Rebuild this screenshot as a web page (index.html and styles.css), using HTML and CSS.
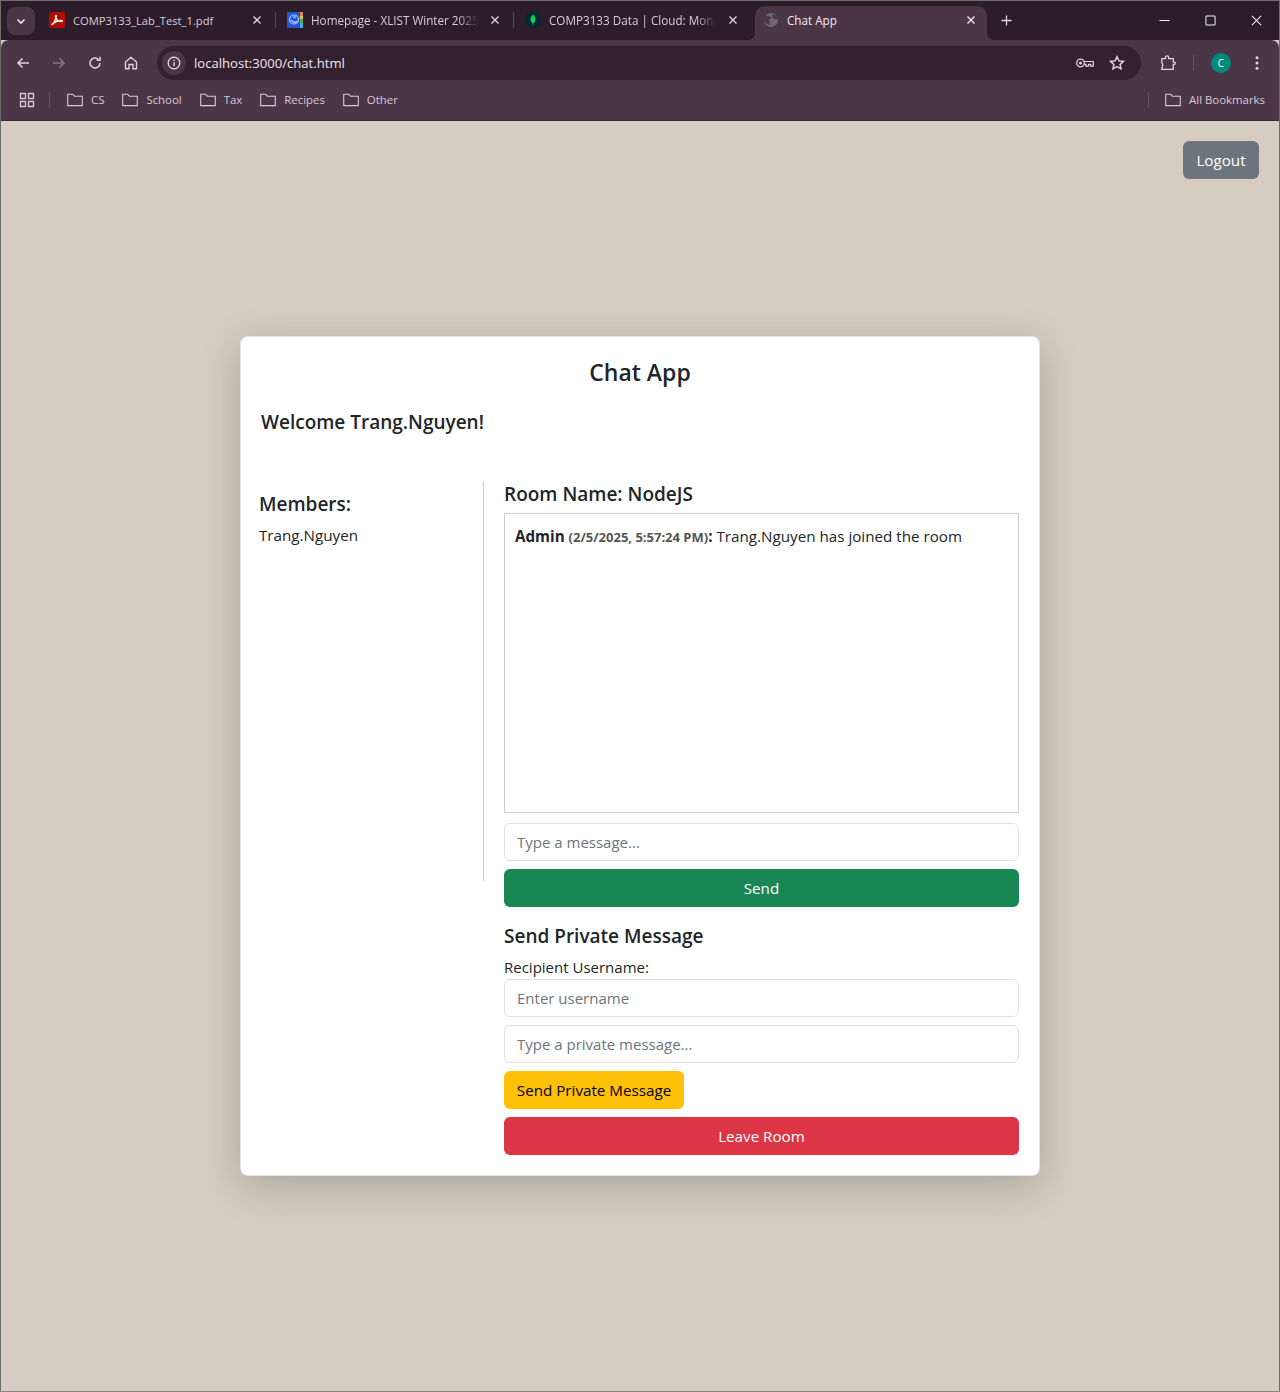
FILE: index.html
```html
<!DOCTYPE html>
<html lang="en">
<head>
    <meta charset="UTF-8">
    <meta name="viewport" content="width=device-width, initial-scale=1.0">
    <title>Chat App</title>
    <link rel="stylesheet" href="styles.css">
</head>
<body>
  <div class="window">
    <!-- browser tabs -->
    <div class="tabstrip">
      <button class="tab-search">
        <svg width="12" height="12" viewBox="0 0 12 12"><path d="M2.500 4.500 6 8l3.500-3.500" fill="none" stroke="#efe3ec" stroke-width="1.600"/></svg>
      </button>
      <div class="tab">
        <svg class="favicon" viewBox="0 0 16 16"><rect width="16" height="16" rx="2" fill="#b30b00"/><path d="M3.200 12.500c1.500-1.200 3.200-4.400 4.100-8.200.2-1.300-.8-1.300-.7 0 .4 2.900 2.200 5 6 5.100 1.100 0 1-.9-.2-.9-2.700 0-5.900.9-8.500 3-.9.800-.9 1.400-.7 1z" fill="none" stroke="#fff" stroke-width="1.400"/></svg>
        <span class="tab-title">COMP3133_Lab_Test_1.pdf</span>
        <svg class="tab-close" viewBox="0 0 10 10"><path d="M1.500 1.500l7 7m0-7l-7 7" stroke="#e6d8e3" stroke-width="1.300"/></svg>
      </div>
      <div class="tab-sep"></div>
      <div class="tab">
        <svg class="favicon" viewBox="0 0 16 16"><rect width="16" height="16" fill="#2456d6"/><rect x="13" width="3" height="4" fill="#e8803a"/><rect x="13" y="4" width="3" height="3" fill="#e8c23a"/><rect x="13" y="7" width="3" height="4" fill="#3fb552"/><rect x="13" y="11" width="3" height="5" fill="#48a6e8"/><circle cx="7" cy="7.500" r="4.500" fill="none" stroke="#b9ccf5" stroke-width="1.200"/><path d="M4 8c2 2.500 4 3 6 1.500M6 5h3" fill="none" stroke="#dbe6ff" stroke-width="1.200"/></svg>
        <span class="tab-title fade">Homepage - XLIST Winter 2025</span>
        <svg class="tab-close" viewBox="0 0 10 10"><path d="M1.500 1.500l7 7m0-7l-7 7" stroke="#e6d8e3" stroke-width="1.300"/></svg>
      </div>
      <div class="tab-sep"></div>
      <div class="tab">
        <svg class="favicon" viewBox="0 0 16 16"><circle cx="8" cy="8" r="8" fill="#04282f"/><path d="M8 2.500c2 2 2.800 4 2.300 6-.4 1.500-1.300 2.300-2 3.200h-.6c-.7-.9-1.600-1.700-2-3.200-.5-2 .3-4 2.300-6z" fill="#13cc5c"/><path d="M7.700 11.500h.6v2h-.6z" fill="#7a9a80"/></svg>
        <span class="tab-title fade">COMP3133 Data | Cloud: MongoDB</span>
        <svg class="tab-close" viewBox="0 0 10 10"><path d="M1.500 1.500l7 7m0-7l-7 7" stroke="#e6d8e3" stroke-width="1.300"/></svg>
      </div>
      <div class="tab active">
        <svg class="favicon" viewBox="0 0 16 16"><circle cx="8" cy="8" r="7" fill="#6d6670"/><path d="M3 3.500c2 .5 3 1 4.500 1s1 2-.5 2.500-1.500 1.500-.5 2.500.5 3-1 3.500C3 12 1 10 1 7.500c0-1.500 1-3 2-4zM10 2c2 1 4 2.500 4.500 5-1 .500-2 .500-3 0s-2.500-1-2-2.500S9.500 3 10 2z" fill="#4a3647"/></svg>
        <span class="tab-title">Chat App</span>
        <svg class="tab-close" viewBox="0 0 10 10"><path d="M1.500 1.500l7 7m0-7l-7 7" stroke="#f2e6ef" stroke-width="1.300"/></svg>
      </div>
      <svg class="new-tab" viewBox="0 0 12 12"><path d="M6 .5v11M.5 6h11" stroke="#e6d8e3" stroke-width="1.400"/></svg>
      <div class="win-controls">
        <svg viewBox="0 0 12 12"><path d="M.5 6h11" stroke="#f2f0f2" stroke-width="1.100"/></svg>
        <svg viewBox="0 0 12 12"><rect x="1" y="1" width="10" height="10" rx="1" fill="none" stroke="#f2f0f2" stroke-width="1.100"/></svg>
        <svg viewBox="0 0 12 12"><path d="M1 1l10 10m0-10L1 11" stroke="#f2f0f2" stroke-width="1.100"/></svg>
      </div>
    </div>

    <!-- address bar -->
    <div class="toolbar">
      <svg class="tool-icon" viewBox="0 0 16 16"><path d="M14 8H3M7.500 3.500 3 8l4.500 4.500" fill="none" stroke="#e2d2df" stroke-width="1.500"/></svg>
      <svg class="tool-icon" viewBox="0 0 16 16"><path d="M2 8h11M8.500 3.500 13 8l-4.500 4.500" fill="none" stroke="#857482" stroke-width="1.500"/></svg>
      <svg class="tool-icon" viewBox="0 0 16 16"><path d="M13 8a5 5 0 1 1-1.600-3.700M13 1.800v3.400H9.600" fill="none" stroke="#e2d2df" stroke-width="1.500"/></svg>
      <svg class="tool-icon" viewBox="0 0 16 16"><path d="M2.500 7 8 2.300 13.500 7v6.700H10V9.500H6v4.200H2.500z" fill="none" stroke="#e2d2df" stroke-width="1.400"/></svg>
      <div class="omnibox">
        <div class="site-info">
          <svg viewBox="0 0 14 14" width="14" height="14"><circle cx="7" cy="7" r="5.800" fill="none" stroke="#efe3ec" stroke-width="1.200"/><path d="M7 6.200v4M7 3.800v1.200" stroke="#efe3ec" stroke-width="1.300"/></svg>
        </div>
        <span class="url">localhost:3000/chat.html</span>
        <svg class="key-icon" viewBox="0 0 18 10"><circle cx="4.500" cy="5" r="3.800" fill="none" stroke="#e2d2df" stroke-width="1.300"/><circle cx="4.500" cy="5" r="1.500" fill="#e2d2df"/><path d="M8.300 3.500h9v4.700h-2.600V6.400h-2.200v1.800H9.900V6.400H8.300" fill="none" stroke="#e2d2df" stroke-width="1.200"/></svg>
        <svg class="star-icon" viewBox="0 0 16 16"><path d="M8 1.800l1.900 4.100 4.500.5-3.300 3 .9 4.400L8 11.600l-4 2.200.9-4.400-3.300-3 4.500-.5z" fill="none" stroke="#e2d2df" stroke-width="1.500"/></svg>
      </div>
      <svg class="tool-icon ext" viewBox="0 0 16 16"><path d="M1.800 3.600h3.700V2.400a1.600 1.600 0 0 1 3.200 0v1.200h4.600v3.500h.9a.9.900 0 0 1 0 2.200h-.9v5H1.800l.9-4.300c.2-1-.4-1.700-.9-2.500z" fill="none" stroke="#e2d2df" stroke-width="1.300"/></svg>
      <div class="bar-sep"></div>
      <div class="avatar">C</div>
      <svg class="tool-icon menu" viewBox="0 0 16 16"><circle cx="8" cy="2.800" r="1.500" fill="#e2d2df"/><circle cx="8" cy="8" r="1.500" fill="#e2d2df"/><circle cx="8" cy="13.200" r="1.500" fill="#e2d2df"/></svg>
    </div>

    <!-- bookmarks -->
    <div class="bookmarks">
      <svg class="apps-icon" viewBox="0 0 16 16"><path d="M1.500 1.500h5v5h-5zM9.500 1.500h5v5h-5zM1.500 9.500h5v5h-5zM9.500 9.500h5v5h-5z" fill="none" stroke="#d9c8d5" stroke-width="1.300"/></svg>
      <div class="bar-sep"></div>
      <div class="bookmark">
        <svg class="folder" viewBox="0 0 16 14"><path d="M.7 12.600V1.200h5l1.600 2h8v9.400z" fill="none" stroke="#d9c8d5" stroke-width="1.100"/></svg>
        <span>CS</span>
      </div>
      <div class="bookmark">
        <svg class="folder" viewBox="0 0 16 14"><path d="M.7 12.600V1.200h5l1.600 2h8v9.400z" fill="none" stroke="#d9c8d5" stroke-width="1.100"/></svg>
        <span>School</span>
      </div>
      <div class="bookmark">
        <svg class="folder" viewBox="0 0 16 14"><path d="M.7 12.600V1.200h5l1.600 2h8v9.400z" fill="none" stroke="#d9c8d5" stroke-width="1.100"/></svg>
        <span>Tax</span>
      </div>
      <div class="bookmark">
        <svg class="folder" viewBox="0 0 16 14"><path d="M.7 12.600V1.200h5l1.600 2h8v9.400z" fill="none" stroke="#d9c8d5" stroke-width="1.100"/></svg>
        <span>Recipes</span>
      </div>
      <div class="bookmark">
        <svg class="folder" viewBox="0 0 16 14"><path d="M.7 12.600V1.200h5l1.600 2h8v9.400z" fill="none" stroke="#d9c8d5" stroke-width="1.100"/></svg>
        <span>Other</span>
      </div>
      <div class="bar-sep push"></div>
      <div class="bookmark all">
        <svg class="folder" viewBox="0 0 16 14"><path d="M.7 12.600V1.200h5l1.600 2h8v9.400z" fill="none" stroke="#d9c8d5" stroke-width="1.100"/></svg>
        <span>All Bookmarks</span>
      </div>
    </div>

    <!-- the page itself -->
    <main class="page">
      <button class="btn btn-logout">Logout</button>

      <div class="card">
        <h2 class="card-title">Chat App</h2>
        <h4 class="welcome">Welcome Trang.Nguyen!</h4>

        <div class="chat-layout">
          <aside class="members">
            <h4>Members:</h4>
            <p>Trang.Nguyen</p>
          </aside>

          <section class="room">
            <h4>Room Name: NodeJS</h4>
            <div class="messages">
              <p><strong>Admin <small>(2/5/2025, 5:57:24 PM)</small>:</strong> Trang.Nguyen has joined the room</p>
            </div>
            <input class="field" type="text" placeholder="Type a message...">
            <button class="btn btn-send">Send</button>

            <h4 class="private-title">Send Private Message</h4>
            <label for="recipient">Recipient Username:</label>
            <input class="field" id="recipient" type="text" placeholder="Enter username">
            <input class="field" type="text" placeholder="Type a private message...">
            <button class="btn btn-private">Send Private Message</button>
            <button class="btn btn-leave">Leave Room</button>
          </section>
        </div>
      </div>
    </main>
  </div>
</body>
</html>
```

FILE: styles.css
```css
*{
  padding: 0;
  margin: 0;
  box-sizing: border-box;
}

body{
  font-family: "Open Sans", "Noto Sans", sans-serif;
  color: #212529;
  background-color: #d6ccc1;
}

.window{
  min-height: 1392px;
  display: flex;
  flex-direction: column;
  border: 1px solid #6e6e68;
  border-bottom-color: #8a857e;
}

/*tab strip*/
.tabstrip{
  height: 39px;
  display: flex;
  align-items: flex-end;
  background-color: #2d1d2b;
  font-size: 11.200px;
  color: #dccbd8;
}

.tab-search{
  width: 28px;
  height: 28px;
  margin: 0 1px 5px 6px;
  border: none;
  border-radius: 8px;
  background-color: #4a3647;
  display: flex;
  align-items: center;
  justify-content: center;
}

.tab{
  width: 237px;
  height: 34px;
  display: flex;
  align-items: center;
  padding: 0 7px 6px 13px;
  flex-shrink: 0;
  position: relative;
}

.tab.active{
  width: 232px;
  margin-left: 6px;
  padding: 0 7px 6px 8px;
  background-color: #4a3647;
  border-radius: 10px 10px 0 0;
  color: #f3e8f0;
  font-size: 11.700px;
}

/*curved feet on the active tab*/
.tab.active::before,
.tab.active::after{
  content: "";
  position: absolute;
  bottom: 0;
  width: 8px;
  height: 8px;
}

.tab.active::before{
  left: -8px;
  background: radial-gradient(circle at 0 0, #2d1d2b 8px, #4a3647 8.500px);
}

.tab.active::after{
  right: -8px;
  background: radial-gradient(circle at 100% 0, #2d1d2b 8px, #4a3647 8.500px);
}

.favicon{
  width: 16px;
  height: 16px;
  flex-shrink: 0;
  margin-right: 8px;
}

.tab-title{
  flex: 1;
  white-space: nowrap;
  overflow: hidden;
}

.tab-title.fade{
  font-size: 11.700px;
  -webkit-mask-image: linear-gradient(to right, #000 88%, transparent 100%);
  mask-image: linear-gradient(to right, #000 88%, transparent 100%);
}

.tab-close{
  width: 10px;
  height: 10px;
  flex-shrink: 0;
  margin-left: 12px;
  margin-right: 4px;
}

.tab-sep{
  width: 1px;
  height: 16px;
  margin: 0 -2px 12px 2px;
  background-color: #5a4757;
  flex-shrink: 0;
}

.new-tab{
  width: 11px;
  height: 11px;
  margin: 0 0 14px 14px;
}

.win-controls{
  margin-left: auto;
  display: flex;
  gap: 35px;
  padding: 0 17px 14px 0;
}

.win-controls svg{
  width: 11px;
  height: 11px;
}

/*address bar*/
.toolbar{
  height: 40px;
  display: flex;
  align-items: center;
  background-color: #4a3647;
  border-radius: 8px 8px 0 0;
  padding: 6px 0 0 14px;
}

.tool-icon{
  width: 16px;
  height: 16px;
  margin-right: 20px;
  flex-shrink: 0;
}

.omnibox{
  width: 984px;
  height: 34px;
  margin-left: -2px;
  border-radius: 17px;
  background-color: #33212f;
  display: flex;
  align-items: center;
  padding: 0 16px 0 5px;
  flex-shrink: 0;
}

.site-info{
  width: 24px;
  height: 24px;
  border-radius: 50%;
  background-color: #4a3647;
  display: flex;
  align-items: center;
  justify-content: center;
  margin-right: 8px;
}

.url{
  flex: 1;
  font-size: 13.100px;
  color: #f1e6ee;
}

.key-icon{
  width: 18px;
  height: 10px;
  margin-right: 15px;
}

.star-icon{
  width: 16px;
  height: 16px;
}

.tool-icon.ext{
  margin-left: 19px;
  margin-right: 0;
}

.bar-sep{
  width: 1px;
  height: 16px;
  background-color: #66525f;
  flex-shrink: 0;
}

.toolbar .bar-sep{
  margin-left: 17px;
  margin-right: 17px;
}

.avatar{
  width: 20px;
  height: 20px;
  border-radius: 50%;
  background-color: #00897b;
  color: #fff;
  font-size: 10px;
  display: flex;
  align-items: center;
  justify-content: center;
  margin-right: 18px;
}

.tool-icon.menu{
  margin-right: 0;
}

/*bookmarks bar*/
.bookmarks{
  height: 41px;
  display: flex;
  align-items: center;
  background-color: #4a3647;
  padding: 0 14px 0 18px;
  font-size: 11.400px;
  color: #d9c8d5;
  border-bottom: 1px solid #3a2b38;
}

.apps-icon{
  width: 16px;
  height: 16px;
}

.bookmarks .bar-sep{
  margin: 0 17px 0 14px;
}

.bookmark{
  display: flex;
  align-items: center;
  gap: 8px;
  margin-right: 18px;
}

.bookmark span{
  margin-top: -2px;
}

.folder{
  width: 16px;
  height: 14px;
}

.bookmarks .bar-sep.push{
  margin: 0 16px 0 auto;
}

.bookmark.all{
  margin-right: 0;
}

/*page*/
.page{
  flex: 1;
  position: relative;
  display: flex;
  justify-content: center;
  padding-top: 215px;
}

.btn{
  height: 38px;
  border: none;
  border-radius: 6px;
  font-family: inherit;
  font-size: 15.200px;
  color: #fff;
}

.btn-logout{
  position: absolute;
  top: 20px;
  right: 20px;
  width: 76px;
  background-color: #6c757d;
}

/*main card*/
.card{
  width: 800px;
  height: 840px;
  padding: 20px;
  background-color: #fff;
  border: 1px solid rgba(0, 0, 0, 0.1);
  border-radius: 8px;
  box-shadow: 0 10px 40px rgba(0, 0, 0, 0.2);
}

h4{
  font-size: 19px;
  font-weight: 600;
  line-height: 24px;
}

.card-title{
  font-size: 23px;
  font-weight: 600;
  line-height: 30px;
  text-align: center;
}

.welcome{
  margin-top: 23px;
}

.chat-layout{
  display: flex;
  margin-top: 47px;
  margin-left: -2px;
}

.members{
  width: 225px;
  height: 400px;
  padding-top: 11px;
  border-right: 1px solid #ccc;
  flex-shrink: 0;
}

.members p{
  margin-top: 7px;
  font-size: 15.200px;
  line-height: 24px;
}

.room{
  width: 515px;
  margin-left: 20px;
  padding-top: 1px;
  display: flex;
  flex-direction: column;
  font-size: 15.200px;
}

.messages{
  height: 300px;
  flex-shrink: 0;
  margin-top: 7px;
  padding: 9px 10px;
  border: 1px solid #ccc;
  line-height: 26px;
}

.messages strong{
  font-weight: 700;
}

.messages small{
  font-size: 13px;
  color: #555;
}

.field{
  height: 38px;
  margin-top: 8px;
  padding: 0 12px;
  font-family: inherit;
  font-size: 15px;
  border: 1px solid #dee2e6;
  border-radius: 6px;
  color: #212529;
  flex-shrink: 0;
}

.messages + .field{
  margin-top: 10px;
}

.field::placeholder{
  color: #6c757d;
}

.btn-send{
  margin-top: 8px;
  background-color: #198754;
}

.private-title{
  margin-top: 17px;
}

label{
  margin-top: 8px;
  font-size: 15px;
  line-height: 22px;
  height: 23px;
}

label + .field{
  margin-top: 0;
}

.btn-private{
  width: 180px;
  margin-top: 8px;
  background-color: #ffc107;
  color: #000;
}

.btn-leave{
  margin-top: 8px;
  background-color: #dc3545;
}
```
